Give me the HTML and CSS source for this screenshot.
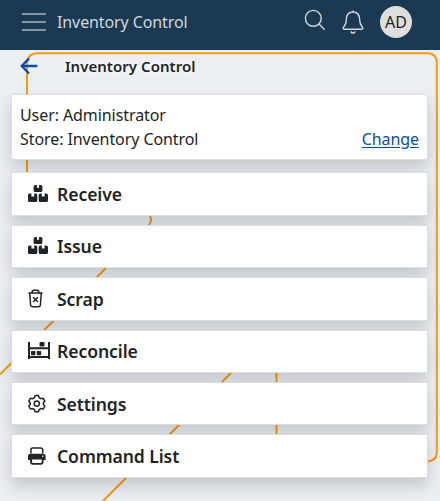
FILE: index.html
```html
<!DOCTYPE html>
<html lang="en">
<head>
<meta charset="utf-8">
<title>Inventory Control</title>
<link rel="stylesheet" href="styles.css">
</head>
<body>
<svg class="backdrop" viewBox="0 0 440 501" aria-hidden="true">
  <path d="M27 190V64Q27 53.2 38 53.2H427Q436.8 53.2 436.8 63V452Q436.8 461.5 426 461.5M148 212Q154 220 148 226M106 268 0 374.500M231 373 103 501M276.500 373V440"/>
</svg>
<header class="topbar">
  <svg class="menu" viewBox="0 0 24 20"><path d="M0 2h24M0 10h24M0 18h24"/></svg>
  <span class="brand">Inventory Control</span>
  <svg class="search" viewBox="0 0 22 22"><circle cx="9.300" cy="9.300" r="7.900"/><path d="m15 15 5.700 5.700"/></svg>
  <svg class="bell" viewBox="0 0 22 26"><path d="M11 1.500v1.500M11 3C6.500 3 4.300 6.500 4.300 11C4.300 15.500 3 16.500 1.500 18.200C.8 19.200 1.100 20.200 2.200 20.200H19.800C20.900 20.200 21.200 19.200 20.500 18.200C19 16.500 17.700 15.500 17.700 11C17.700 6.500 15.500 3 11 3ZM8.700 22.500Q11 25.600 13.300 22.500"/></svg>
  <span class="avatar">AD</span>
</header>
<main>
  <div class="heading">
    <svg class="back" viewBox="0 0 18 18"><path d="M17.300 9H2M9 1.500 1.700 9 9 16.500"/></svg>
    <h1>Inventory Control</h1>
  </div>
  <section class="info">
    <div>User: Administrator</div>
    <div class="store"><span>Store: Inventory Control</span><a href="#">Change</a></div>
  </section>
  <nav class="list">
    <a class="item" href="#"><svg class="icon" viewBox="0 0 22 22"><path class="solid" d="M7.200 2h1.700v2.700h2.200V2h1.700q1.600 0 1.600 1.600v3.800Q14.400 9 12.800 9H7.200Q5.600 9 5.600 7.400V3.600Q5.600 2 7.200 2ZM1.700 10.600h1.700v2.800h2.800v-2.800h1.500q1.600 0 1.600 1.600v5.200q0 1.700-1.600 1.700H1.700Q0 19.100 0 17.400v-5.200q0-1.600 1.700-1.600ZM12.300 10.600h1.500v2.800h2.800v-2.800h1.700q1.700 0 1.700 1.600v5.200q0 1.700-1.700 1.700h-6q-1.600 0-1.600-1.700v-5.200q0-1.600 1.600-1.600Z"/></svg><span>Receive</span></a>
    <a class="item" href="#"><svg class="icon" viewBox="0 0 22 22"><path class="solid" d="M7.200 2h1.700v2.700h2.200V2h1.700q1.600 0 1.600 1.600v3.800Q14.400 9 12.800 9H7.200Q5.600 9 5.600 7.400V3.600Q5.600 2 7.200 2ZM1.700 10.600h1.700v2.800h2.800v-2.800h1.500q1.600 0 1.600 1.600v5.200q0 1.700-1.600 1.700H1.700Q0 19.100 0 17.400v-5.200q0-1.600 1.700-1.600ZM12.300 10.600h1.500v2.800h2.800v-2.800h1.700q1.700 0 1.700 1.600v5.200q0 1.700-1.700 1.700h-6q-1.600 0-1.600-1.700v-5.200q0-1.600 1.600-1.600Z"/></svg><span>Issue</span></a>
    <a class="item" href="#"><svg class="icon" viewBox="0 0 22 22"><path d="M.4 5h14.200M4 4.800Q4.200 2.300 5.800 2.300h3.400Q10.800 2.300 11 4.800M1.700 5l.9 12q.1 1.800 1.900 1.800h6q1.800 0 1.900-1.800l.9-12M5.100 9.200l4.800 4.800M9.900 9.200 5.100 14"/></svg><span>Scrap</span></a>
    <a class="item" href="#"><svg class="icon" viewBox="0 0 22 22"><path class="thick" d="M1 2v17M21 2v17M1 8.300h20M1 16.900h20"/><path class="solid" d="M12.500 2h3q1 0 1 1v2.600q0 1-1 1h-3q-1 0-1-1V3q0-1 1-1ZM3.800 11h2.800q.8 0 .8.800v2.600q0 .8-.8.800H3.800q-.8 0-.8-.8v-2.600q0-.8.8-.8ZM9.600 11h2.800q.8 0 .8.800v2.600q0 .8-.8.800H9.600q-.8 0-.8-.8v-2.600q0-.8.8-.8Z"/></svg><span>Reconcile</span></a>
    <a class="item" href="#"><svg class="icon" viewBox="0 0 22 22"><path d="M7.200 2.600h3.200l.8 2.100 1.800 1 2.200-.4 1.600 2.700-1.400 1.700v1.800l1.400 1.700-1.600 2.800-2.200-.4-1.800 1-.8 2.100H7.200l-.8-2.100-1.800-1-2.200.4L.8 13.200l1.400-1.700V9.700L.8 8l1.600-2.700 2.200.4 1.800-1Z"/><circle cx="8.800" cy="10.600" r="2.600"/></svg><span>Settings</span></a>
    <a class="item" href="#"><svg class="icon" viewBox="0 0 22 22"><path d="M2.900 8.500V4.800Q2.900 2.900 4.800 2.900h8q1.900 0 1.900 1.900v3.700"/><path class="solid" fill-rule="evenodd" d="M2.500 8.700h12.600q2.500 0 2.500 2.500v3.700h-2v1.700q0 3.200-2.800 3.200H5q-2.900 0-2.900-3.200v-1.700H0v-3.700q0-2.500 2.500-2.500ZM4 14.500v2.200q0 1.400 1.300 1.400h7.100q1.400 0 1.400-1.400v-2.200Z"/><circle class="light" cx="14.800" cy="11.300" r=".8"/></svg><span>Command List</span></a>
  </nav>
</main>
</body>
</html>
```
FILE: styles.css
```css
* { box-sizing: border-box; }
body {
  margin: 0;
  height: 501px;
  overflow: hidden;
  background: #ebeff4;
  color: #212426;
  font: 16px/24px "Noto Sans", sans-serif;
}
svg { display: block; fill: none; stroke: currentColor; flex: none; }
.backdrop {
  position: absolute;
  inset: 0;
  z-index: -1;
  width: 440px;
  height: 501px;
  color: #f39c12;
  stroke-width: 2;
}
.topbar {
  display: flex;
  align-items: center;
  height: 50px;
  padding: 0 28px 6px 22px;
  background: #1b3952;
  color: #d0d7dd;
}
.menu { width: 24px; height: 20px; color: #a4b0ba; stroke-width: 1.6; }
.brand { margin-left: 11px; flex: 1; letter-spacing: -.1px; }
.search { width: 22px; height: 22px; margin-top: -4px; stroke-width: 1.4; }
.bell { width: 22px; height: 26px; margin: 0 16px 0 16px; stroke-width: 1.4; }
.avatar {
  width: 32px;
  height: 32px;
  border-radius: 50%;
  background: #dedede;
  color: #212426;
  line-height: 32px;
  text-align: center;
}
main { padding: 0 12px 0 11px; }
.heading { display: flex; align-items: center; height: 44px; padding: 0 0 12px 9px; }
.back { width: 18px; height: 18px; color: #0d4ba0; stroke-width: 2.300; }
h1 {
  margin: 0 0 0 27px;
  font-size: 15px;
  font-weight: 600;
  letter-spacing: .04px;
  text-shadow: 0 0 4px #fff, 0 0 6px #fff;
}
.info, .item {
  border: 1px solid #dbdee1;
  background: #fff;
  box-shadow: 0 8px 16px rgba(0, 0, 0, .17);
}
.info { height: 66px; padding: 8px 8px; border-radius: 3px; letter-spacing: -.08px; }
.store { display: flex; justify-content: space-between; }
.store a { color: #0d4ba0; text-underline-offset: 2px; }
.list { display: grid; gap: 9px; margin-top: 12.400px; }
.item {
  display: flex;
  align-items: center;
  height: 43.400px;
  padding-left: 16px;
  color: inherit;
  font-size: 17.600px;
  font-weight: 600;
  letter-spacing: -.1px;
  text-decoration: none;
}
.icon { width: 22px; height: 22px; margin-right: 7px; stroke-width: 1.500; }
.thick { stroke-width: 2; }
.solid { fill: currentColor; stroke: none; }
.light { fill: #fff; stroke: none; }
```
